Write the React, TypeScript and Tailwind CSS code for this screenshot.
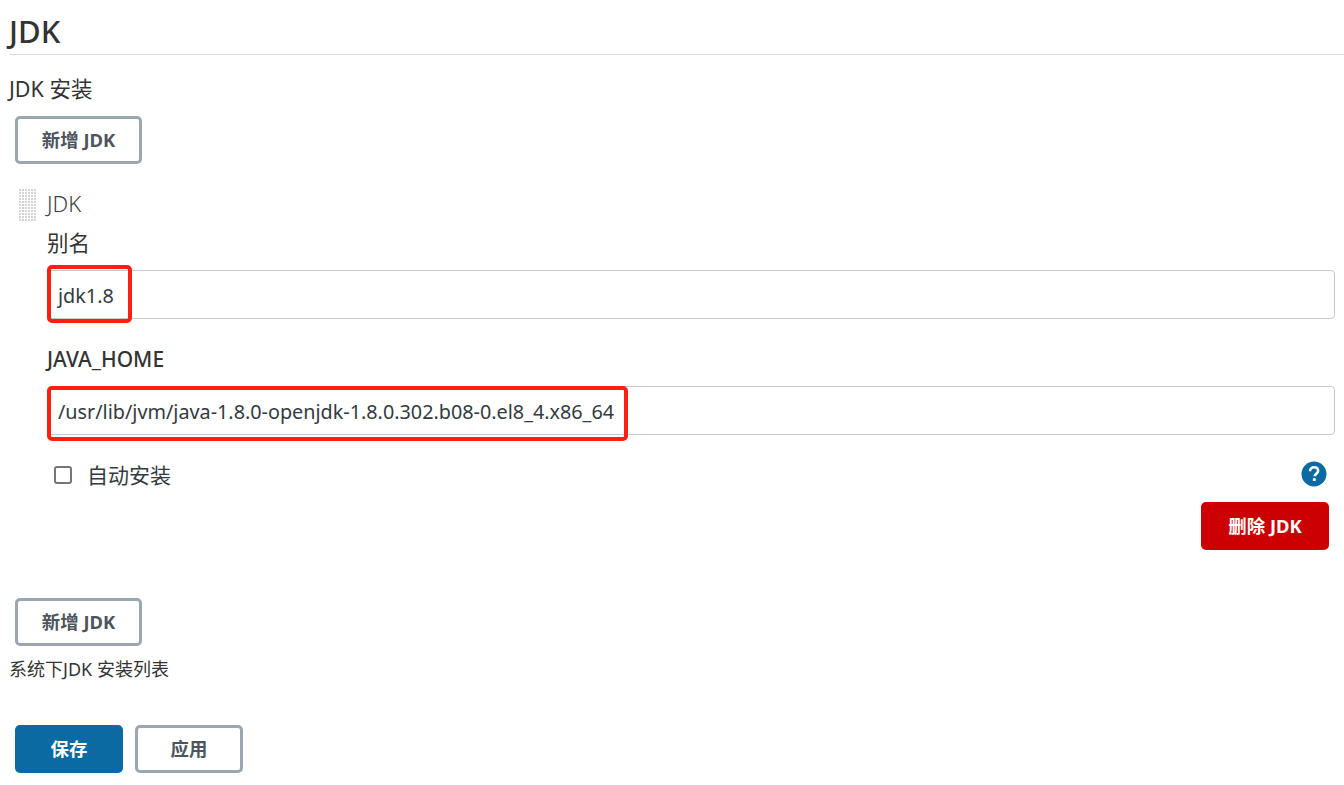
const font = "font-['Noto_Sans','Noto_Sans_CJK_SC',sans-serif]";

const OutlineButton = ({ children, className = '' }: { children: string; className?: string }) => (
  <button className={`flex h-[48px] items-center justify-center rounded-[5px] border-[3px] border-[#9aa7b0] bg-white text-[18.4px] font-bold text-[#4d545d] ${className}`}>
    {children}
  </button>
);

const DragHandle = () => (
  <svg width="18" height="32" viewBox="0 0 18 32" className="shrink-0">
    <defs>
      <pattern id="dots" width="3" height="3" patternUnits="userSpaceOnUse">
        <rect width="2" height="2" fill="#d4d4d4" />
      </pattern>
    </defs>
    <rect width="18" height="32" fill="url(#dots)" />
  </svg>
);

const Field = ({ value, children }: { value: string; children: React.ReactNode }) => (
  <div className="relative">
    <div className="flex h-[49px] items-center rounded-[4px] border border-[#c8c8c8] bg-white pl-[10px] pt-[3px] text-[19.8px] text-[#333a42]">
      {value}
    </div>
    {children}
  </div>
);

export default function App() {
  return (
    <div className={`${font} h-[785px] w-[1344px] overflow-hidden bg-white text-[#333333]`}>
      <div className="pl-[9px]">
        <h2 className="h-[55px] border-b border-[#dcdcdc] pt-[8px] text-[31px] leading-[46px] font-medium">JDK</h2>
        <div className="mt-[19px] text-[21.5px] leading-[30px]">JDK 安装</div>
      </div>
      <div className="mt-[12px] pl-[15px]">
        <OutlineButton className="w-[127px]">新增 JDK</OutlineButton>
      </div>

      <div className="mt-[25px] flex pl-[19px]">
        <DragHandle />
        <div className="ml-[10px] flex-1 pr-[9px]">
          <div className="-mt-[3px] text-[22px] leading-[34px] font-light text-[#3a3f45]">JDK</div>
          <div className="mt-[10px] text-[21.5px] leading-[26px]">别名</div>
          <div className="mt-[14px]">
            <Field value="jdk1.8">
              <div className="absolute -top-[5px] left-0 h-[58px] w-[85px] rounded-[5px] border-[4px] border-[#ff1f10]" />
            </Field>
          </div>
          <div className="mt-[26px] text-[21px] leading-[28px] font-medium">JAVA_HOME</div>
          <div className="mt-[13px]">
            <Field value="/usr/lib/jvm/java-1.8.0-openjdk-1.8.0.302.b08-0.el8_4.x86_64">
              <div className="absolute top-0 left-0 h-[55px] w-[581px] rounded-[5px] border-[4px] border-[#ff1f10]" />
            </Field>
          </div>
          <div className="mt-[26px] flex h-[28px] items-center">
            <div className="ml-[7px] h-[18px] w-[18px] rounded-[3px] border-2 border-[#767676] bg-white" />
            <span className="ml-[15px] text-[21px] leading-[28px] text-[#333a42]">自动安装</span>
            <svg width="26" height="26" viewBox="0 0 26 26" className="ml-auto mr-[8px] -translate-y-px">
              <circle cx="13" cy="13" r="12.5" fill="#0b6aa2" />
              <path d="M9 10.2c0-2.4 1.8-3.9 4.1-3.9s4 1.4 4 3.5c0 1.7-1 2.5-2.1 3.3-.9.7-1.3 1.1-1.3 2.2" fill="none" stroke="#fff" strokeWidth="2.6" />
              <rect x="11.9" y="17.2" width="2.8" height="2.8" fill="#fff" />
            </svg>
          </div>
          <div className="mt-[13px] flex justify-end pr-[6px]">
            <button className="flex h-[48px] w-[128px] items-center justify-center rounded-[5px] bg-[#cc0003] text-[18.4px] font-bold text-white">
              删除 JDK
            </button>
          </div>
        </div>
      </div>

      <div className="mt-[48px] pl-[15px]">
        <OutlineButton className="w-[127px]">新增 JDK</OutlineButton>
      </div>
      <div className="mt-[11px] pl-[9px] text-[18px] leading-[24px]">系统下JDK 安装列表</div>
      <div className="mt-[44px] flex gap-[12px] pl-[15px]">
        <button className="flex h-[48px] w-[108px] items-center justify-center rounded-[5px] bg-[#0b6aa2] text-[18.4px] font-bold text-white">保存</button>
        <OutlineButton className="w-[108px]">应用</OutlineButton>
      </div>
    </div>
  );
}
